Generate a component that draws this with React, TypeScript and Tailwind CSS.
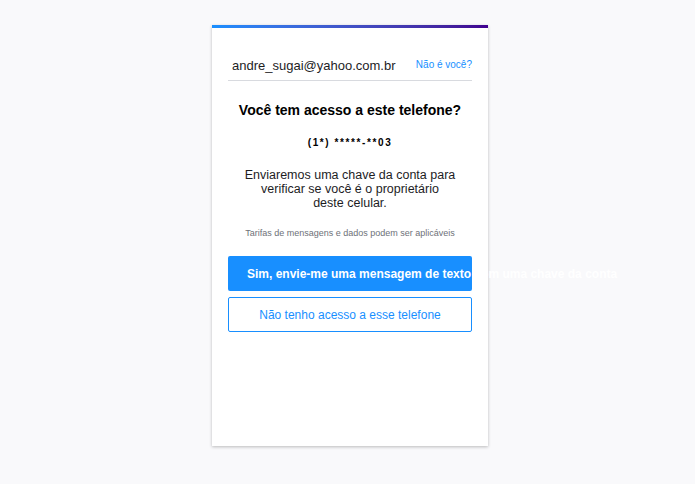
export default function App() {
  return (
    <div className="min-h-[484px] w-full bg-[#f9f9fb] pt-[25px] font-['Helvetica_Neue','Liberation_Sans',Arial,sans-serif]">
      <div className="ml-[212px] w-[276px] h-[421px] bg-white shadow-[0_1px_3px_rgba(0,0,0,0.25)]">
        <div className="h-[3px] bg-gradient-to-r from-[#188fff] to-[#400090]" />
        <div className="px-4">
          <div className="flex items-end justify-between border-b border-[#d8dadf] pt-[29px] pb-[6px] pl-[4px]">
            <span className="text-[13px] leading-[17px] text-[#1d1d1f]">andre_sugai@yahoo.com.br</span>
            <span className="text-[10px] leading-[14px] text-[#188fff] pb-[2px]">Não é você?</span>
          </div>
          <h1 className="mt-[20px] text-center text-[14px] leading-[18px] font-bold text-black">
            Você tem acesso a este telefone?
          </h1>
          <p className="mt-[17px] text-center text-[10px] leading-[14px] font-bold tracking-[1.6px] text-black">
            (1*) *****-**03
          </p>
          <p className="mt-[18px] text-center text-[12.5px] leading-[14px] text-[#1d1d1f]">
            Enviaremos uma chave da conta para
            <br />
            verificar se você é o proprietário
            <br />
            deste celular.
          </p>
          <p className="mt-[17px] text-center text-[9px] leading-[12px] text-[#6e7178] whitespace-nowrap">
            Tarifas de mensagens e dados podem ser aplicáveis
          </p>
          <button className="mt-[17px] block w-full h-[35px] rounded-[2px] bg-[#188fff] px-[19px] text-left text-[12px] font-bold text-white whitespace-nowrap overflow-visible">
            Sim, envie-me uma mensagem de texto com uma chave da conta
          </button>
          <button className="mt-[6px] block w-full h-[35px] rounded-[2px] border border-[#188fff] bg-white text-center text-[12px] text-[#188fff]">
            Não tenho acesso a esse telefone
          </button>
        </div>
      </div>
    </div>
  );
}
